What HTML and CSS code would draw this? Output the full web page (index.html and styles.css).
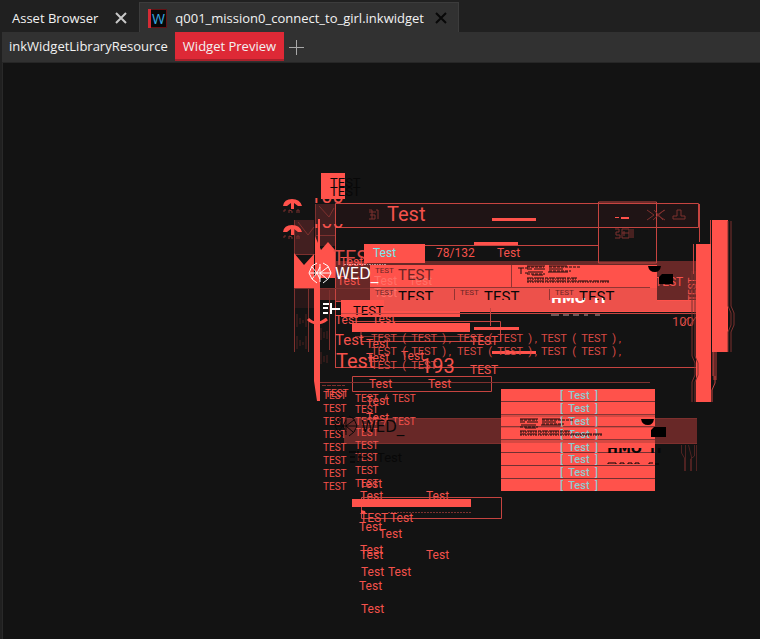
FILE: index.html
```html
<!DOCTYPE html>
<html lang="en">
<head>
<meta charset="utf-8">
<title>Widget Preview</title>
<link rel="stylesheet" href="styles.css">
</head>
<body>
<header class="documents">
  <div class="document"><button class="name">Asset Browser</button><button class="close" aria-label="Close Asset Browser"><svg width="12" height="12" viewBox="0 0 12 12"><path d="M1 1l10 10m0-10l-10 10"/></svg></button></div>
  <div class="document active"><svg class="file-icon" width="19" height="19" viewBox="0 0 19 19"><path fill="#080808" stroke="#641014" d="M.5.5h18v18H.5z"/><path fill="#d42b35" d="M0 0h3v19H0z"/><text x="4" y="15">W</text></svg><button class="name">q001_mission0_connect_to_girl.inkwidget</button><button class="close" aria-label="Close q001_mission0_connect_to_girl.inkwidget"><svg width="12" height="12" viewBox="0 0 12 12"><path d="M1 1l10 10m0-10l-10 10"/></svg></button></div>
</header>
<nav class="views">
  <button class="view">inkWidgetLibraryResource</button>
  <button class="view selected">Widget Preview</button>
  <button class="add" aria-label="Add view"><svg width="15" height="15" viewBox="0 0 15 15"><path d="M7.500 0v15M0 7.500h15"/></svg></button>
</nav>
<main class="preview">
<svg class="canvas" viewBox="3 63 757 576" preserveAspectRatio="xMinYMin meet">
  <defs>
    <clipPath id="count-a"><path d="M308 198h40v6h-40z"/></clipPath>
    <clipPath id="count-b"><path d="M308 224h40v5h-40z"/></clipPath>
    <clipPath id="row-cut"><path d="M370 290h330v10H370z"/></clipPath>
    <clipPath id="sign-a"><path d="M548 298h62v6h-62z"/></clipPath>
    <clipPath id="sign-b"><path d="M606 448h60v5h-60z"/></clipPath>
    <g id="arrow">
      <path class="solid" d="M0 7Q1 0 9 0t10 7h-4l-4-3v6H8V4L4 7z"/>
      <path class="line dim" d="M1 13v-2h2m3 3v-3l3 1v2m5 0v-3h2v3"/>
    </g>
    <g id="microprint">
      <path d="M0 1h18M22 1h18M0 4h5m2 0h11M22 4h14M1 7h15M21 7h20M5 10h11"/>
      <path d="M0 13h50M0 16h82" stroke-dasharray="6 1 10 1 3 1"/>
      <path d="M0 14h50M0 17h82" stroke-dasharray="2 1 1 1"/>
      <path d="M0 2h17m5 0h32M22 6h22M0 9h18" stroke-dasharray="3 1"/>
    </g>
    <g id="emblem"><path d="M8 0L3 3 0 10l3 6 5 4M14 0l5 3 3 7-3 6-5 4M11 1v18M1 10h21M3 4l5 6-5 6M19 4l-8 6 7 6M8 10l3-6M8 10l3 6"/></g>
    <g id="rail"><path d="M0 0v85l3 7v12l-3 7v20M3 0v85l3 7v12l-3 7v20"/></g>
  </defs>

  <!-- upper panels -->
  <path fill="#1f1415" d="M335 204h364v23H335z"/>
  <path fill="#421f20" d="M315 204h20v42h-20zM294 220h20v34h-20z"/>
  <path fill="#682827" d="M335 261h361v40H335zM315 288h56v12h-56z"/>
  <path fill="#281718" d="M294 288h21v20h-21z"/>
  <path class="line" d="M335.500 203.500h363v24h-363zM335.500 227v140M335 367.500h361M425 245.500h173M598.500 202v61h58v-61zM699.500 204v38M335 301.500h361"/>
  <path class="line dim" d="M294.500 220v132M315.500 204v148M329.500 290v60M308.500 262v90M294 288.500h76M315 235.500h20M294 254.500h21M319 206l10 11 5-9M298 222l10 13 6-8M317.500 330v70"/>
  <path class="solid" d="M321 173h24v26h-24zM294 253l10 12 10-11v34h-20zM315 236l6 14 7-8 7 8v28h-20z"/>
  <path class="solid" d="M314 277h6v124h-3l-3-20zM318 219h2v30h-2z"/>
  <path class="line strong" d="M308 319q4 4 9 4t10-4"/>
  <use href="#arrow" x="283" y="199"/><use href="#arrow" x="283" y="225"/>
  <g class="t20" clip-path="url(#count-a)"><text x="310" y="203">100</text></g>
  <g class="t20" clip-path="url(#count-b)"><text x="310" y="228">100</text></g>
  <g class="ink t13"><text x="330" y="187">TEST</text><text x="330" y="196">TEST</text></g>
  <path class="line dim" d="M369 210h3v9m-3-7h7m-6 3h5v4h-6m9-9v9m-2-9h2M647 210l7 5-7 5m18-10l-8 5 8 5m-11-10l9 10m-10 0l11-10M677 210h4v6h4v3h-12v-3h4z"/>
  <path class="line dim" d="M615 229h4v3h-3v3h4v3h-5m7-9h7v9h-7zm0 4h7m2-4v9m2-9v9m-9-7v5"/>
  <path class="solid" d="M615 217h4v1h-4zM621 217h8v2h-8zM492 218h44v3h-44zM474 242h44v3h-44z"/>
  <text class="t20" x="387" y="221">Test</text>
  <text class="t20 dim-text" x="333" y="265">TES</text>

  <!-- signal banner -->
  <path class="solid" d="M364 244h61v19h-61zM370 265h287v35H370zM341 300h355v12H341zM341 307h119v10H341zM352 323h118v9H352z"/>
  <path fill="#ed514b" d="M370 288h287v13h39v10H384v-11h-14z"/>
  <path stroke="#923432" fill="none" d="M370 287.500h280M511.500 265v22M454.500 289v11M549.500 289v11"/>
  <text class="cyan t12" x="373" y="257">Test</text>
  <g class="t12"><text x="436" y="257">78/132</text><text x="497" y="257">Test</text><text x="337" y="285">Test</text><text x="340" y="266">Test</text></g>
  <g class="t12 ghost"><text x="374" y="285">Test</text><text x="409" y="285">Test</text><text x="374" y="297">Test</text></g>
  <text class="t15 maroon" x="398" y="280">TEST</text>
  <g class="t8 maroon"><text x="375" y="295">TEST</text><text x="460" y="295">TEST</text><text x="555" y="295">TEST</text><text x="375" y="273">TEST</text></g>
  <path stroke="#181010" d="M518 268h6m-3 0v6m4-6h3m-3 5h3" fill="none"/>
  <use class="print" href="#microprint" x="527" y="265"/>
  <g class="t12"><text x="655" y="286">TEST</text></g>
  <text class="t10" transform="translate(696 301) rotate(-90)">TEST</text>
  <path d="M648 266h13q-1 6-6 6-6 0-7-6zM662 274h11v10h-14v-7z"/>
  <path fill="none" stroke="#fff" stroke-opacity=".5" d="M344 264.500h43" stroke-dasharray="2 1 1 1"/>
  <use class="emblem" href="#emblem" x="309" y="263"/>
  <text class="brand white" x="335" y="279">WED_</text>
  <g class="sign white" clip-path="url(#sign-a)"><text x="551" y="303">HMO</text><text x="594" y="303">IT</text></g>
  <g class="ink t15" clip-path="url(#row-cut)"><text x="398" y="302">TEST</text><text x="484" y="302">TEST</text><text x="579" y="302">TEST</text></g>
  <path stroke="#fff" stroke-width="2" d="M323 304h6m2-1v11m0-5h9m-17-1h5m-5 5h5" fill="none"/>
  <path stroke="#c6a09e" d="M551 315h8m4 0h6m4 0h6m5 0h4m7 0h5" fill="none"/>
  <text class="ink t13" x="353" y="315">TEST</text>

  <!-- telemetry panel -->
  <path class="line" d="M341 313.500h355M352 321.500h148.500v20H361v-10M490.500 308v18M352.500 376.500h139v15h-139z"/>
  <path class="line dim" d="M320 382.500h330M355 336.500h115" />
  <path class="solid" d="M474 327h45v3h-45zM492 351h44v3h-44z"/>
  <g class="t12"><text x="335" y="324">Test</text><text x="372" y="323">Test</text><text x="366" y="348">Test</text><text x="366" y="362">Test</text><text x="401" y="360">Test</text><text x="369" y="388">Test</text><text x="428" y="388">Test</text><text x="470" y="345">TEST</text><text x="470" y="374">TEST</text></g>
  <text class="t15" x="335" y="345">Test</text><text class="t20" x="336" y="368">Test</text>
  <text class="t20" x="421" y="373">193</text>
  <g class="code dim-text">
    <text x="371" y="342">TEST  (  TEST  ) ,</text><text x="457" y="342">TEST  (  TEST  ) ,</text><text x="541" y="342">TEST  (  TEST  ) ,</text>
    <text x="371" y="355">TEST  (  TEST  ) ,</text><text x="457" y="355">TEST  (  TEST  ) ,</text><text x="541" y="355">TEST  (  TEST  ) ,</text>
    <text x="371" y="369">TEST  (  TEST</text>
  </g>
  <text class="t13 dim-text" x="672" y="326">100</text><path class="line" d="M682 325l7-8m1 8l6-8"/>
  <path class="line faint" d="M297 314v13m3-9v6m3-4v3m3-9v13M297 336v13m3-9v6m3-4v3m3-9v13M321 328v12m3-8v6m3-7v8M321 352v12m3-8v6m3-7v8"/>

  <!-- meters -->
  <path class="solid" d="M696 244h15v158h-15zM712 220h16v132h-16z"/>
  <path class="line" d="M710.500 220v24M693.500 244v30"/>
  <use class="line dim" href="#rail" x="692" y="271"/>
  <use class="line dim" href="#rail" x="728" y="221"/>
  <path fill="#682827" d="M713 352h4v28h-4z"/>
  <path class="line" d="M713 376v-24M712 402v-12l3-7v-7"/>

  <!-- lower readouts -->
  <path fill="#682827" d="M344 418h353v26H344z"/>
  <path class="line dim" d="M344 418.500h353M344 443.500h353"/>
  <path class="line dim" d="M322 385.500h23" stroke-dasharray="4 1"/>
  <g class="t10"><text x="323" y="399">TEST</text><text x="325" y="397">TEST</text><text x="323" y="412">TEST</text><text x="323" y="425">TEST</text><text x="323" y="438">TEST</text><text x="323" y="451">TEST</text><text x="323" y="464">TEST</text><text x="323" y="477">TEST</text><text x="323" y="490">TEST</text>
  <text x="355" y="402">TEST  /  TEST</text><text x="355" y="413">TEST</text><text x="355" y="425">TEST  /  TEST</text><text x="355" y="436">TEST</text><text x="355" y="449">TEST</text><text x="355" y="461">TEST</text><text x="355" y="474">TEST</text><text x="355" y="487">TEST</text></g>
  <g class="t12"><text x="366" y="405">Test</text><text x="366" y="422">Test</text><text x="359" y="488">Test</text><text x="360" y="500">Test</text><text x="426" y="500">Test</text></g>
  <use class="emblem black" href="#emblem" x="335" y="416"/>
  <text class="brand ink" x="361" y="432">WED_</text>
  <text class="ink t13" x="377" y="462">Test</text>
  <path fill="none" stroke="#000" d="M349 452h7m2-1v11m0-5h10m-18 0h5m-5 5h5"/>

  <!-- option list -->
  <path class="solid" d="M501 389h154v102H501z"/>
  <path stroke="#713032" d="M501 401.500h154m-154 13h154m-154 12h154m-154 13h154m-154 13h154m-154 13h154m-154 13h154" fill="none"/>
  <g class="option"><text x="579" y="399">[  Test  ]</text><text x="579" y="412">[  Test  ]</text><text x="579" y="425">[  Test  ]</text><text x="579" y="438">[  Test  ]</text><text x="579" y="451">[  Test  ]</text><text x="579" y="463">[  Test  ]</text><text x="579" y="476">[  Test  ]</text><text x="579" y="489">[  Test  ]</text></g>
  <path fill="#a33b38" fill-opacity=".45" d="M501 414h154v3H501zm0 12h154v2H501zm0 13h154v4H501z"/>
  <use class="print" href="#microprint" x="520" y="418"/>
  <path d="M641 419h13q-1 6-6 6-6 0-7-6zM654 427h12v10h-15v-7z"/>
  <g class="sign ink" clip-path="url(#sign-b)"><text x="607" y="453">HMO</text><text x="650" y="453">IT</text></g>
  <path stroke="#000" d="M608 464v-1h8v1m4 0v-1h4v1m4 0v-1h4v1m3 0v-1h4v1m10 0v-1h4m2 1h4" fill="none"/>
  <path class="line faint" d="M681.500 445v8l3 5v13M685.500 445v26M688.500 445l3 12v14M694.500 445v11l-4 3v12M696.500 445v26"/>

  <!-- footer readouts -->
  <path class="line" d="M361.500 497.500h140v21h-140z"/>
  <path class="solid" d="M352 499h119v8H352z"/>
  <path class="line dim" d="M388 512.500h83" stroke-dasharray="2 1"/>
  <path class="solid" d="M361 510l4 1 1 3h-5z"/>
  <g class="t12"><text x="360" y="522">TEST</text><text x="390" y="522">Test</text><text x="359" y="531">Test</text><text x="379" y="538">Test</text><text x="360" y="554">Test</text><text x="360" y="559">Test</text><text x="426" y="559">Test</text><text x="361" y="576">Test</text><text x="388" y="576">Test</text><text x="359" y="590">Test</text><text x="361" y="613">Test</text></g>
</svg>
</main>
</body>
</html>
```

FILE: styles.css
```css
* { box-sizing: border-box; }
body {
  margin: 0;
  min-height: 100vh;
  display: flex;
  flex-direction: column;
  background: #202020;
  color: #f2f2f2;
  font-family: "Open Sans", "Noto Sans", sans-serif;
  font-size: 13px;
}
button {
  border: 0;
  padding: 0;
  background: none;
  color: inherit;
  font: inherit;
  white-space: nowrap;
}
button svg { display: block; fill: none; stroke: currentColor; stroke-width: 2; }
.documents { display: flex; height: 32px; padding-top: 2px; }
.document { display: flex; align-items: center; padding: 2px 12px 0; gap: 17px; }
.document.active { gap: 8px; padding: 1px 11px 0 8px; background: #313131; border: 1px solid #3c3c3c; border-bottom: 0; }
.close { color: #c8c8c8; }
.active .close { color: #080808; margin-left: 3px; }
.file-icon text { fill: #38a8e0; font-size: 14px; }
.views { display: flex; height: 31px; margin-left: 2px; background: #313131; border-bottom: 1px solid #262626; }
.view { padding: 0 7px 2px; }
.selected { background: #de2936; border-bottom: 2px solid #a9212b; padding: 0 8px; margin-bottom: 1px; }
.add { padding: 0 5px; color: #a8a8a8; }
.add svg { stroke-width: 1; }
.preview { flex: 1; margin-left: 2px; background: #131313; border-left: 1px solid #292929; overflow: hidden; }
.canvas { display: block; width: 100%; fill: #000; font-family: Roboto, sans-serif; }
.canvas text { fill: #f5524c; white-space: pre; }
.solid { fill: #ff524b; }
.line { fill: none; stroke: #c64440; stroke-width: 1; }
.line.dim { stroke: #7d302e; }
.line.faint { stroke: #4e2221; }
.line.strong { stroke: #ff524b; stroke-width: 3; }
.canvas .dim-text text, .canvas .dim-text { fill: #db4a45; }
.canvas .cyan { fill: #78e7ed; }
.canvas .white, .canvas .white text { fill: #fff; }
.canvas .ink, .canvas .ink text { fill: #080808; }
.canvas .maroon, .canvas .maroon text { fill: #6a2524; }
.canvas .ghost text { fill: #ff7068; }
.t8 { font-size: 8px; }
.t10 { font-size: 10px; }
.t12 { font-size: 12px; }
.t13 { font-size: 13px; }
.t15 { font-size: 15px; }
.t20 { font-size: 20px; }
.code { font-size: 11px; }
.brand { font-family: "DejaVu Sans", sans-serif; font-size: 15px; }
.sign { font-family: "DejaVu Sans", sans-serif; font-size: 13px; font-weight: bold; }
.option { font-size: 11px; text-anchor: middle; font-weight: 500; }
.canvas .option text { fill: #8fcbd0; }
.print { fill: none; stroke: #180d0d; stroke-width: 1; }
.emblem { fill: none; stroke: #fff; stroke-width: 1; }
.emblem.black { stroke: #080808; }
```
